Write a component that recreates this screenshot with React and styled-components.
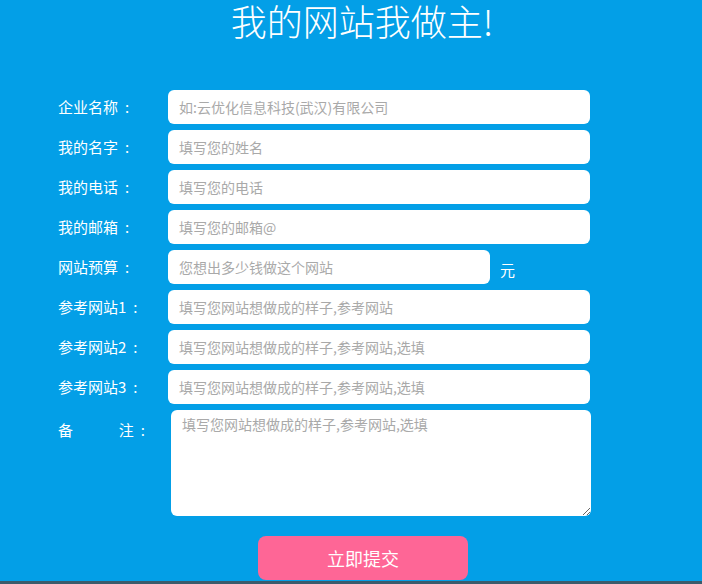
import React from "react";
import styled, { createGlobalStyle } from "styled-components";

const GlobalStyle = createGlobalStyle`
  html, body {
    margin: 0;
    padding: 0;
    background: #3b5b6b;
  }
  body {
    font-family: "Liberation Sans", "Noto Sans CJK SC", sans-serif;
  }
`;

const fields = [
  { label: "企业名称", placeholder: "如:云优化信息科技(武汉)有限公司" },
  { label: "我的名字", placeholder: "填写您的姓名" },
  { label: "我的电话", placeholder: "填写您的电话" },
  { label: "我的邮箱", placeholder: "填写您的邮箱@" },
  { label: "网站预算", placeholder: "您想出多少钱做这个网站", unit: "元" },
  { label: "参考网站1", placeholder: "填写您网站想做成的样子,参考网站" },
  { label: "参考网站2", placeholder: "填写您网站想做成的样子,参考网站,选填" },
  { label: "参考网站3", placeholder: "填写您网站想做成的样子,参考网站,选填" },
];

export default function App() {
  return (
    <>
      <GlobalStyle />
      <Page>
        <Title>我的网站我做主!</Title>
        <Form onSubmit={(e) => e.preventDefault()}>
          {fields.map((f) => (
            <Row key={f.label}>
              <Label>
                {f.label}
                <Colon>:</Colon>
              </Label>
              <Input placeholder={f.placeholder} short={!!f.unit} />
              {f.unit && <Unit>{f.unit}</Unit>}
            </Row>
          ))}
          <NoteRow>
            <Label note>
              <span>备</span>
              <span>
                注<Colon>:</Colon>
              </span>
            </Label>
            <Textarea placeholder="填写您网站想做成的样子,参考网站,选填" />
          </NoteRow>
          <Submit type="submit">立即提交</Submit>
        </Form>
      </Page>
      <Footer />
    </>
  );
}

const Page = styled.div`
  background: #039fe7;
  height: 581px;
  overflow: hidden;
`;

const Title = styled.h1`
  margin: 0 0 0 22px;
  text-align: center;
  color: #fff;
  font-family: "Noto Sans CJK SC", sans-serif;
  font-weight: 300;
  font-size: 36px;
  line-height: 40px;
  height: 40px;
`;

const Form = styled.form`
  display: flex;
  flex-direction: column;
  padding-left: 58px;
  margin-top: 50px;
`;

const Row = styled.div`
  display: flex;
  align-items: center;
  height: 34px;
  margin-bottom: 6px;
`;

const NoteRow = styled.div`
  display: flex;
  align-items: flex-start;
`;

const Label = styled.label`
  display: flex;
  justify-content: ${(p) => (p.note ? "space-between" : "flex-start")};
  width: ${(p) => (p.note ? "87px" : "110px")};
  margin-right: ${(p) => (p.note ? "26px" : "0")};
  padding-top: ${(p) => (p.note ? "10px" : "0")};
  color: #fff;
  font-size: 15px;
  font-family: "Noto Sans CJK SC", sans-serif;
  line-height: 20px;
  flex-shrink: 0;
`;

const Colon = styled.span`
  margin-left: 7px;
`;

const Input = styled.input`
  box-sizing: border-box;
  width: ${(p) => (p.short ? "322px" : "422px")};
  height: 34px;
  border: none;
  border-radius: 6px;
  background: #fff;
  padding: 0 11px;
  font-size: 14px;
  font-family: "Noto Sans CJK SC", sans-serif;
  color: #333;
  outline: none;

  &::placeholder {
    color: #a9a9a9;
  }
`;

const Unit = styled.span`
  margin-left: 10px;
  margin-top: 4px;
  color: #fff;
  font-size: 15px;
  font-family: "Noto Sans CJK SC", sans-serif;
`;

const Textarea = styled.textarea`
  box-sizing: border-box;
  width: 420px;
  height: 106px;
  border: none;
  border-radius: 6px;
  background: #fff;
  padding: 4px 11px;
  font-size: 14px;
  font-family: "Noto Sans CJK SC", sans-serif;
  outline: none;

  &::placeholder {
    color: #a9a9a9;
  }
`;

const Submit = styled.button`
  margin: 20px 0 0 200px;
  width: 210px;
  height: 44px;
  border: none;
  border-radius: 8px;
  background: #fe6696;
  color: #fff;
  font-size: 18px;
  font-family: "Noto Sans CJK SC", sans-serif;
  cursor: pointer;
`;

const Footer = styled.div`
  height: 3px;
  background: #3b5b6b;
`;
